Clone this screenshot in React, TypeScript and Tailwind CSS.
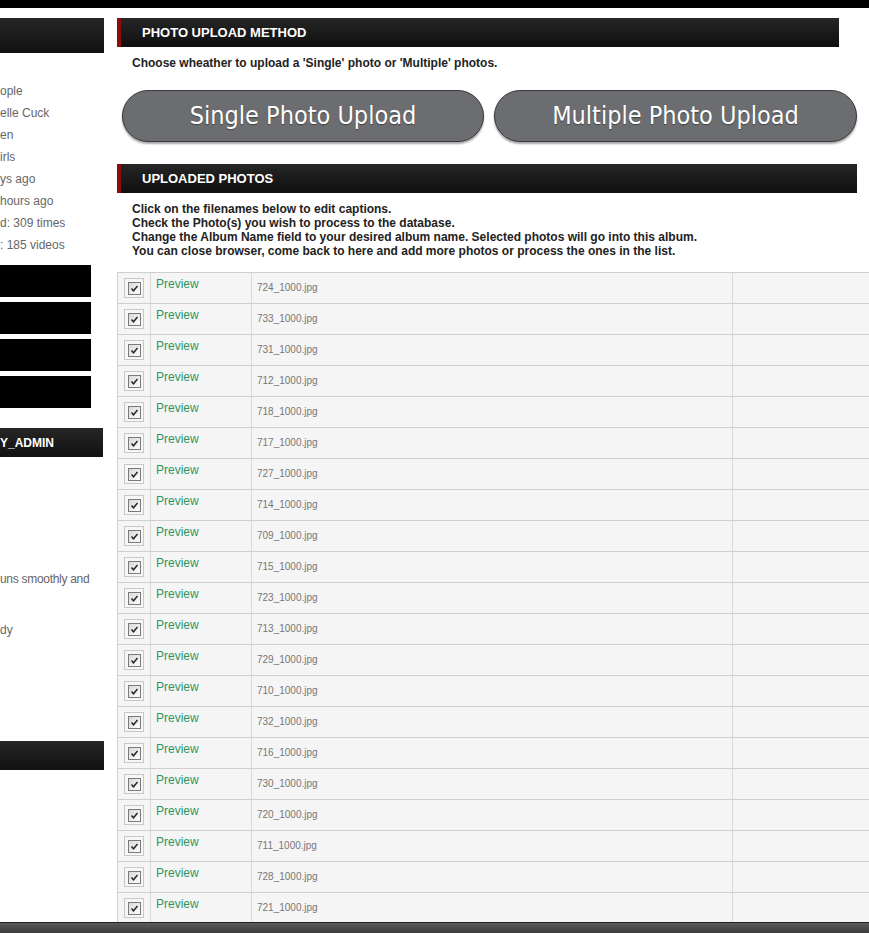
import React from "react";

const files = [
  "724", "733", "731", "712", "718", "717", "727", "714", "709", "715", "723",
  "713", "729", "710", "732", "716", "730", "720", "711", "728", "721",
];

function Check() {
  return (
    <div className="w-[20px] h-[20px] border border-[#c8c8c8] bg-[#f7f7f7] flex items-center justify-center">
      <div className="w-[13px] h-[13px] border border-[#7a7a7a] bg-gradient-to-br from-[#d8d8d8] to-[#ffffff] flex items-center justify-center">
        <svg width="9" height="9" viewBox="0 0 9 9">
          <path d="M1.5 4.5 L3.5 6.8 L7.5 2" fill="none" stroke="#222" strokeWidth="1.4" />
        </svg>
      </div>
    </div>
  );
}

function SectionHeader({ title, w }: { title: string; w: string }) {
  return (
    <div className={`${w} h-[29px] flex items-center bg-gradient-to-b from-[#262626] to-[#0f0f0f] border-l-[4px] border-[#8e0c0c]`}>
      <span className="ml-[21px] text-white font-bold text-[13px] leading-none">{title}</span>
    </div>
  );
}

export default function App() {
  return (
    <div
      className="w-[869px] h-[933px] overflow-hidden bg-white relative"
      style={{ fontFamily: '"Liberation Sans", Arial, sans-serif' }}
    >
      <div className="h-[8px] bg-black" />
      <div className="flex">
        {/* Sidebar */}
        <div className="w-[104px] shrink-0 pt-[10px]">
          <div className="h-[35px] bg-gradient-to-b from-[#262626] to-[#111]" />
          <div className="pt-[27px] text-[12px] leading-[22px] text-[#666]">
            <div>ople</div>
            <div>elle Cuck</div>
            <div>en</div>
            <div>irls</div>
            <div>ys ago</div>
            <div>hours ago</div>
            <div>d: 309 times</div>
            <div>: 185 videos</div>
          </div>
          <div className="mt-[9px] flex flex-col gap-[5px] w-[91px]">
            <div className="h-[32px] bg-black" />
            <div className="h-[32px] bg-black" />
            <div className="h-[32px] bg-black" />
            <div className="h-[32px] bg-black" />
          </div>
          <div className="mt-[20px] h-[29px] w-[103px] bg-gradient-to-b from-[#262626] to-[#111] flex items-center">
            <span className="text-white font-bold text-[12px]">Y_ADMIN</span>
          </div>
          <div className="mt-[111px] text-[12px] leading-[22px] text-[#666] whitespace-nowrap">
            <div className="tracking-[-0.3px]">uns smoothly and</div>
            <div className="mt-[29px]">dy</div>
          </div>
          <div className="mt-[100px] h-[29px] bg-gradient-to-b from-[#262626] to-[#111]" />
        </div>

        {/* Main */}
        <div className="ml-[13px] w-[800px] shrink-0 pt-[10px]">
          <SectionHeader title="PHOTO UPLOAD METHOD" w="w-[722px]" />
          <div className="mt-[9px] pl-[15px] text-[12px] leading-[14px] font-bold text-[#222]">
            Choose wheather to upload a 'Single' photo or 'Multiple' photos.
          </div>
          <div className="mt-[20px] ml-[5px] flex gap-[10px]">
            {["Single Photo Upload", "Multiple Photo Upload"].map((t, i) => (
              <div
                key={t}
                className={`${i === 0 ? "w-[362px]" : "w-[363px]"} h-[52px] rounded-full bg-[#6c6d71] border border-[#3a3a3a] shadow-[0_2px_2px_rgba(0,0,0,0.35)] flex items-center justify-center text-white text-[25px] [text-shadow:0_1px_1px_rgba(0,0,0,0.4)]`}
                style={{ fontFamily: '"DejaVu Sans Condensed", "DejaVu Sans", sans-serif' }}
              >
                {t}
              </div>
            ))}
          </div>
          <div className="mt-[22px]">
            <SectionHeader title="UPLOADED PHOTOS" w="w-[740px]" />
          </div>
          <div className="mt-[9px] pl-[15px] text-[12px] leading-[14px] font-bold text-[#222]">
            <div>Click on the filenames below to edit captions.</div>
            <div>Check the Photo(s) you wish to process to the database.</div>
            <div>Change the Album Name field to your desired album name. Selected photos will go into this album.</div>
            <div>You can close browser, come back to here and add more photos or process the ones in the list.</div>
          </div>
          <div className="mt-[14px] border-t border-l border-[#cfcfcf] bg-[#f5f5f5]">
            {files.map((f) => (
              <div key={f} className="h-[31px] flex border-b border-[#cfcfcf]">
                <div className="w-[33px] border-r border-[#d9d9d9] flex items-start justify-center pt-[5px]">
                  <Check />
                </div>
                <div className="w-[101px] border-r border-[#d9d9d9] pl-[5px] pt-[4px] text-[12px] leading-[14px] text-[#2e9560]">
                  Preview
                </div>
                <div className="w-[481px] border-r border-[#d9d9d9] pl-[5px] pb-[2px] flex items-center text-[10px] text-[#777]">
                  {f}_1000.jpg
                </div>
                <div className="flex-1" />
              </div>
            ))}
          </div>
        </div>
      </div>
      <div className="absolute left-0 right-0 top-[922px] h-[11px] border-t border-[#222] bg-gradient-to-b from-[#5a5a5a] to-[#3c3c3c]" />
    </div>
  );
}
